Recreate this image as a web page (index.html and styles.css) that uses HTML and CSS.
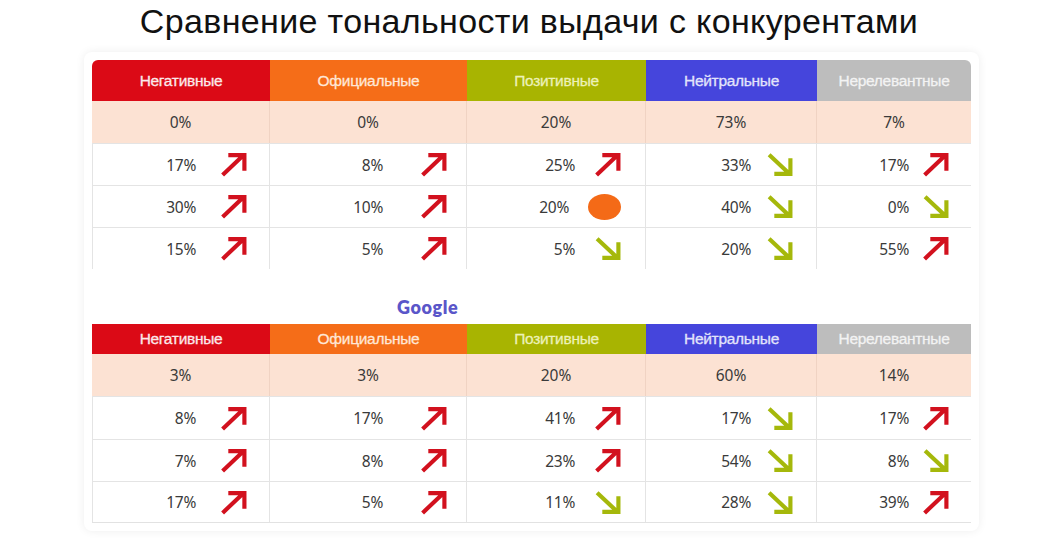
FILE: index.html
```html
<!DOCTYPE html>
<html lang="ru">
<head>
<meta charset="utf-8">
<title>Сравнение тональности</title>
<link rel="stylesheet" href="styles.css">
</head>
<body>
<div class="page">
  <h1 class="title">Сравнение тональности выдачи с конкурентами</h1>
  <div class="card">
    <div class="tbl tbl-top">
      <div class="hd neg first">Негативные</div>
      <div class="hd off">Официальные</div>
      <div class="hd pos">Позитивные</div>
      <div class="hd neu">Нейтральные</div>
      <div class="hd irr last">Нерелевантные</div>

      <div class="tot">0%</div><div class="tot">0%</div><div class="tot">20%</div><div class="tot">73%</div><div class="tot">7%</div>

      <div class="cell c1"><span>17%</span><svg class="ar up" viewBox="0 0 26 24"><path d="M2.5 22 L22 3.5 M8 3 H23.5 V18"/></svg></div>
      <div class="cell c2"><span>8%</span><svg class="ar up" viewBox="0 0 26 24"><path d="M2.5 22 L22 3.5 M8 3 H23.5 V18"/></svg></div>
      <div class="cell c3"><span>25%</span><svg class="ar up" viewBox="0 0 26 24"><path d="M2.5 22 L22 3.5 M8 3 H23.5 V18"/></svg></div>
      <div class="cell c4"><span>33%</span><svg class="ar down" viewBox="0 0 26 24"><path d="M3 2.5 L22 20.5 M23.5 6 V21 H8"/></svg></div>
      <div class="cell c5"><span>17%</span><svg class="ar up" viewBox="0 0 26 24"><path d="M2.5 22 L22 3.5 M8 3 H23.5 V18"/></svg></div>

      <div class="cell c1"><span>30%</span><svg class="ar up" viewBox="0 0 26 24"><path d="M2.5 22 L22 3.5 M8 3 H23.5 V18"/></svg></div>
      <div class="cell c2"><span>10%</span><svg class="ar up" viewBox="0 0 26 24"><path d="M2.5 22 L22 3.5 M8 3 H23.5 V18"/></svg></div>
      <div class="cell c3 dotcell"><span>20%</span><i class="dot"></i></div>
      <div class="cell c4"><span>40%</span><svg class="ar down" viewBox="0 0 26 24"><path d="M3 2.5 L22 20.5 M23.5 6 V21 H8"/></svg></div>
      <div class="cell c5"><span>0%</span><svg class="ar down" viewBox="0 0 26 24"><path d="M3 2.5 L22 20.5 M23.5 6 V21 H8"/></svg></div>

      <div class="cell c1"><span>15%</span><svg class="ar up" viewBox="0 0 26 24"><path d="M2.5 22 L22 3.5 M8 3 H23.5 V18"/></svg></div>
      <div class="cell c2"><span>5%</span><svg class="ar up" viewBox="0 0 26 24"><path d="M2.5 22 L22 3.5 M8 3 H23.5 V18"/></svg></div>
      <div class="cell c3"><span>5%</span><svg class="ar down" viewBox="0 0 26 24"><path d="M3 2.5 L22 20.5 M23.5 6 V21 H8"/></svg></div>
      <div class="cell c4"><span>20%</span><svg class="ar down" viewBox="0 0 26 24"><path d="M3 2.5 L22 20.5 M23.5 6 V21 H8"/></svg></div>
      <div class="cell c5"><span>55%</span><svg class="ar up" viewBox="0 0 26 24"><path d="M2.5 22 L22 3.5 M8 3 H23.5 V18"/></svg></div>
    </div>

    <div class="engine">Google</div>

    <div class="tbl tbl-bottom">
      <div class="hd neg">Негативные</div>
      <div class="hd off">Официальные</div>
      <div class="hd pos">Позитивные</div>
      <div class="hd neu">Нейтральные</div>
      <div class="hd irr">Нерелевантные</div>

      <div class="tot">3%</div><div class="tot">3%</div><div class="tot">20%</div><div class="tot">60%</div><div class="tot">14%</div>

      <div class="cell c1"><span>8%</span><svg class="ar up" viewBox="0 0 26 24"><path d="M2.5 22 L22 3.5 M8 3 H23.5 V18"/></svg></div>
      <div class="cell c2"><span>17%</span><svg class="ar up" viewBox="0 0 26 24"><path d="M2.5 22 L22 3.5 M8 3 H23.5 V18"/></svg></div>
      <div class="cell c3"><span>41%</span><svg class="ar up" viewBox="0 0 26 24"><path d="M2.5 22 L22 3.5 M8 3 H23.5 V18"/></svg></div>
      <div class="cell c4"><span>17%</span><svg class="ar down" viewBox="0 0 26 24"><path d="M3 2.5 L22 20.5 M23.5 6 V21 H8"/></svg></div>
      <div class="cell c5"><span>17%</span><svg class="ar up" viewBox="0 0 26 24"><path d="M2.5 22 L22 3.5 M8 3 H23.5 V18"/></svg></div>

      <div class="cell c1"><span>7%</span><svg class="ar up" viewBox="0 0 26 24"><path d="M2.5 22 L22 3.5 M8 3 H23.5 V18"/></svg></div>
      <div class="cell c2"><span>8%</span><svg class="ar up" viewBox="0 0 26 24"><path d="M2.5 22 L22 3.5 M8 3 H23.5 V18"/></svg></div>
      <div class="cell c3"><span>23%</span><svg class="ar up" viewBox="0 0 26 24"><path d="M2.5 22 L22 3.5 M8 3 H23.5 V18"/></svg></div>
      <div class="cell c4"><span>54%</span><svg class="ar down" viewBox="0 0 26 24"><path d="M3 2.5 L22 20.5 M23.5 6 V21 H8"/></svg></div>
      <div class="cell c5"><span>8%</span><svg class="ar down" viewBox="0 0 26 24"><path d="M3 2.5 L22 20.5 M23.5 6 V21 H8"/></svg></div>

      <div class="cell c1"><span>17%</span><svg class="ar up" viewBox="0 0 26 24"><path d="M2.5 22 L22 3.5 M8 3 H23.5 V18"/></svg></div>
      <div class="cell c2"><span>5%</span><svg class="ar up" viewBox="0 0 26 24"><path d="M2.5 22 L22 3.5 M8 3 H23.5 V18"/></svg></div>
      <div class="cell c3"><span>11%</span><svg class="ar down" viewBox="0 0 26 24"><path d="M3 2.5 L22 20.5 M23.5 6 V21 H8"/></svg></div>
      <div class="cell c4"><span>28%</span><svg class="ar down" viewBox="0 0 26 24"><path d="M3 2.5 L22 20.5 M23.5 6 V21 H8"/></svg></div>
      <div class="cell c5"><span>39%</span><svg class="ar up" viewBox="0 0 26 24"><path d="M2.5 22 L22 3.5 M8 3 H23.5 V18"/></svg></div>
    </div>
  </div>
</div>
</body>
</html>
```

FILE: styles.css
```css
* { box-sizing: border-box; }

html, body {
  margin: 0;
  padding: 0;
  background: #ffffff;
}

.page {
  width: 1043px;
  height: 545px;
  overflow: hidden;
}

.title {
  margin: 0;
  height: 52px;
  padding: 0 0 10px 15px;
  line-height: 42px;
  text-align: center;
  font-family: "Liberation Sans", Arial, sans-serif;
  font-weight: 400;
  font-size: 34px;
  letter-spacing: 0.35px;
  color: #111;
}

.card {
  margin-left: 84px;
  width: 895px;
  padding: 8px;
  background: #fff;
  border-radius: 8px;
  box-shadow: 0 0 10px rgba(0, 0, 0, 0.07);
}

.tbl {
  display: grid;
  grid-template-columns: 178px 197px 179px 171px 154px;
  font-family: "Noto Sans", "Open Sans", sans-serif;
}

.tbl-top {
  grid-template-rows: 41px 42px 42px 42px 42px;
}

.tbl-bottom {
  grid-template-rows: 30px 42px 43px 42px 41px;
  border-bottom: 1px solid #e2e2e2;
}

.hd {
  display: flex;
  align-items: center;
  justify-content: center;
  font-family: "Liberation Sans", Arial, sans-serif;
  font-size: 15.5px;
  letter-spacing: -0.3px;
  -webkit-text-stroke: 0.3px currentColor;
  color: #fff;
}

.tbl-top .first { border-top-left-radius: 6px; }
.tbl-top .last { border-top-right-radius: 6px; }

.neg { background: #db0a16; color: #fbe9ea; }
.off { background: #f56d18; color: #ffe7d6; }
.pos { background: #a8b401; color: #ecf1b8; }
.neu { background: #4545dc; color: #e2e4fb; }
.irr { background: #bdbdbd; color: #f3f3f3; }

.tot {
  display: flex;
  align-items: center;
  justify-content: center;
  background: #fce2d3;
  border-right: 1px solid #f0d3c3;
  font-size: 15.5px;
  color: #3a3a3a;
}

.tot:nth-child(10) { border-right: none; }

.cell {
  display: flex;
  align-items: center;
  justify-content: flex-end;
  border-top: 1px solid #e4e4e4;
  border-right: 1px solid #e4e4e4;
  font-size: 15.5px;
  color: #3a3a3a;
  letter-spacing: -0.3px;
}

.cell.c1 { border-left: 1px solid #e4e4e4; padding-right: 22px; gap: 24px; }
.cell.c2 { padding-right: 19px; gap: 37px; }
.cell.c3 { padding-right: 24px; gap: 19px; }
.cell.c4 { padding-right: 23px; gap: 15px; }
.cell.c5 { padding-right: 22px; gap: 13px; border-right: none; }

.ar {
  width: 27px;
  height: 25px;
  flex: none;
  fill: none;
  stroke-width: 4;
  stroke-linecap: butt;
  stroke-linejoin: miter;
}

.ar.up { stroke: #d2111e; }
.ar.down { stroke: #a5b80b; }

.dotcell { gap: 15px; }

.dot {
  display: block;
  width: 33px;
  height: 26px;
  border-radius: 50%;
  background: #f46a17;
}

.engine {
  height: 55px;
  padding: 28px 0 0 305px;
  font-family: "Lato", "Noto Sans", sans-serif;
  font-weight: 800;
  font-size: 18px;
  letter-spacing: 0.6px;
  line-height: 20px;
  color: #5a56c9;
}
```
